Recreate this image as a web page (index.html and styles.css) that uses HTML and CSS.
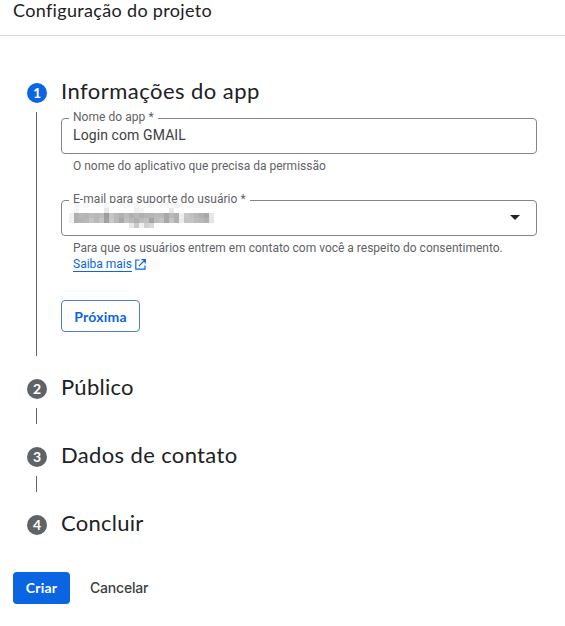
FILE: index.html
```html
<!DOCTYPE html>
<html lang="pt-BR">
<head>
  <meta charset="UTF-8" />
  <meta name="viewport" content="width=device-width, initial-scale=1.0" />
  <title>Configuração do projeto</title>
  <link rel="stylesheet" href="styles.css">
</head>
<body>
  <header class="header">
    <h1>Configuração do projeto</h1>
  </header>

  <main class="stepper">
    <section class="step active">
      <div class="step-header">
        <span class="badge">1</span>
        <h2 class="t-info">Informações do app</h2>
      </div>
      <div class="step-body">
        <div class="field">
          <label for="appName">Nome do app *</label>
          <input type="text" id="appName" value="Login com GMAIL" />
        </div>
        <p class="hint h-name">O nome do aplicativo que precisa da permissão</p>

        <div class="field">
          <label>E-mail para suporte do usuário *</label>
          <svg class="masked" width="145" height="25" viewBox="0 0 29 5" shape-rendering="crispEdges" id="masked"></svg>
          <svg class="arrow" width="10" height="5" viewBox="0 0 10 5"><path d="M0 0h10L5 5z" fill="#202124"/></svg>
        </div>
        <p class="hint h-mail">Para que os usuários entrem em contato com você a respeito do consentimento.</p>
        <p class="hint"><a class="link" href="#">Saiba mais</a><svg class="open" width="11" height="11" viewBox="0 0 11 11" fill="none" stroke="#0b65e3" stroke-width="1.2"><path d="M4.5 1H.8v9.2H10V6.5M6.5.7h3.8v3.8M10 1L3.8 7.2"/></svg></p>

        <button class="btn outlined">Próxima</button>
      </div>
    </section>

    <section class="step">
      <div class="step-header">
        <span class="badge">2</span>
        <h2>Público</h2>
      </div>
      <div class="step-line"></div>
    </section>

    <section class="step">
      <div class="step-header">
        <span class="badge">3</span>
        <h2 class="t-contact">Dados de contato</h2>
      </div>
      <div class="step-line"></div>
    </section>

    <section class="step last">
      <div class="step-header">
        <span class="badge">4</span>
        <h2>Concluir</h2>
      </div>
    </section>
  </main>

  <footer class="actions">
    <button class="btn primary">Criar</button>
    <button class="btn text">Cancelar</button>
  </footer>

  <script>
    // grey levels of the hidden address, one row per line of blocks
    const rows = [
      'ff f5 fb f8 ff ff ff f5 ff ff fa f5 fb f5 ff f8 f5 ff fa f8 f8 f3 f8 ff f8 f8 f8 fa ff',
      'ff f5 ff ff ff ff ff e8 ff ff ff ff ff f0 f5 ff ff ff ff ff e8 ff ff ff ff ff ff ff ff',
      'f2 b0 b8 b4 bc b8 bc 9c c4 b8 b0 bc b0 b8 b0 b4 b4 bc b8 a8 b8 b0 f0 c8 c0 b8 b0 a8 e8',
      'f2 b0 b4 b8 c4 b8 c4 a0 c8 b8 a8 c0 b8 b0 bc c0 a4 bc c4 a8 c4 b0 ec c4 c4 bc b8 b0 e4',
      'ff ff ff ff ff ff ff ff ff ff ff ff e8 c8 f0 d0 d8 ff ff ff ff ff ff ff ff ff ff ff ff'
    ];
    document.getElementById('masked').innerHTML = rows.map((row, y) =>
      row.split(' ').map((c, x) => `<rect x="${x}" y="${y}" width="1" height="1" fill="#${c}${c}${c}"/>`).join('')
    ).join('');
  </script>
</body>
</html>
```
FILE: styles.css
```css
* {
  box-sizing: border-box;
}
body {
  margin: 0;
  font-family: Roboto, Arial, sans-serif;
  background: #fff;
  color: #202124;
}
h1, h2, p {
  margin: 0;
  font-weight: 400;
}
h1, h2, .btn {
  font-family: Lato, sans-serif;
}
.header {
  height: 36px;
  padding-left: 13px;
  border-bottom: 1px solid #dadce0;
}
h1 {
  font-size: 18px;
  line-height: 20px;
  letter-spacing: 0.33px;
}
.stepper {
  padding: 43px 28px 0 27px;
}
.step {
  height: 68px;
}
.step.active {
  height: 296px;
}
.step.last {
  height: 28px;
}
.step-header {
  display: flex;
  align-items: center;
  gap: 14px;
  height: 28px;
}
h2 {
  font-size: 22px;
  line-height: 28px;
  padding-bottom: 4px;
  letter-spacing: 0.25px;
  white-space: nowrap;
}
.t-info {
  letter-spacing: 0.46px;
}
.t-contact {
  letter-spacing: 0.36px;
}
.badge {
  width: 20px;
  height: 20px;
  border-radius: 50%;
  background: #5f6368;
  color: #fff;
  font: bold 14px/20px Lato, sans-serif;
  text-align: center;
}
.active .badge {
  background: #0b65e3;
}
.step-line {
  width: 1px;
  height: 16px;
  margin: 5px 0 0 9px;
  background: #5f6368;
}
.step-body {
  height: 244px;
  margin: 5px 0 0 9px;
  padding: 6px 0 0 24px;
  border-left: 1px solid #5f6368;
}
.field {
  position: relative;
  height: 36px;
  border: 1px solid #80868b;
  border-radius: 4px;
}
.field label {
  position: absolute;
  top: -10px;
  left: 7px;
  padding: 0 4px;
  background: #fff;
  color: #5f6368;
  font-size: 12px;
  line-height: 16px;
  letter-spacing: 0.05px;
  white-space: nowrap;
}
.field input {
  display: block;
  width: 100%;
  height: 32px;
  padding: 0 11px;
  border: none;
  outline: none;
  background: none;
  color: #3c4043;
  font: 14px Roboto, sans-serif;
  letter-spacing: 0.1px;
}
.hint {
  padding-left: 12px;
  color: #5f6368;
  font-size: 12px;
  line-height: 16px;
  white-space: nowrap;
}
.h-name {
  padding-top: 4px;
  margin-bottom: 26px;
}
.h-mail {
  padding-top: 4px;
}
.masked {
  position: absolute;
  left: 7px;
  top: 2px;
}
.arrow {
  position: absolute;
  right: 16px;
  top: 14px;
}
.link {
  color: #0b65e3;
  text-decoration: none;
  border-bottom: 1px solid #0b65e3;
}
.open {
  margin-left: 3px;
  vertical-align: -2px;
}
.btn {
  height: 32px;
  padding: 0 12px 2px;
  border: none;
  border-radius: 4px;
  background: none;
  font-size: 14px;
  font-weight: bold;
  letter-spacing: 0.25px;
  white-space: nowrap;
}
.outlined {
  width: 79px;
  padding: 0;
  margin-top: 28px;
  border: 1px solid #4c7fd0;
  color: #0b65e3;
}
.actions {
  display: flex;
  gap: 8px;
  padding: 33px 13px 0;
}
.primary {
  width: 57px;
  background: #0b65e3;
  color: #fff;
}
.text {
  color: #3c4043;
  font-family: Inter, sans-serif;
  font-weight: 500;
  letter-spacing: -0.2px;
}
```
